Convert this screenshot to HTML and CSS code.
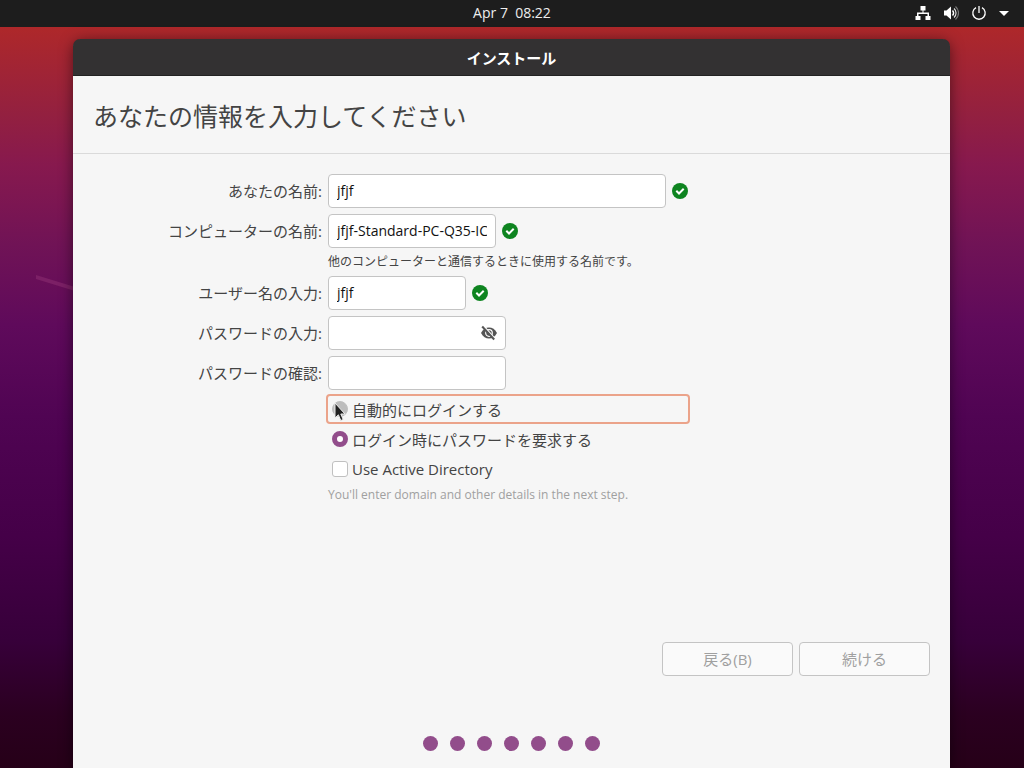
FILE: index.html
```html
<!DOCTYPE html>
<html lang="ja">
<head>
    <meta charset="UTF-8">
    <meta name="viewport" content="width=device-width, initial-scale=1.0">
    <title>インストール</title>
    <link rel="stylesheet" href="styles.css">
</head>
<body>
    <svg class="streak" viewBox="0 0 40 18" aria-hidden="true">
        <path d="M1 0 L40 12 V16 L1 4 Z"/>
    </svg>

    <header class="topbar">
        <time class="clock">Apr 7&nbsp; 08:22</time>
        <div class="tray">
            <svg width="16" height="16" viewBox="0 0 16 16" fill="#fff">
                <path d="M5.500 1h5v4.500h-2v2H14V11h1.500v4h-5v-4h2V9h-9v2h2v4h-5v-4H2V7.500h5.500v-2h-2z"/>
            </svg>
            <svg width="16" height="16" viewBox="0 0 16 16">
                <path d="M1 5.500h2.500L8 1.500v13L3.500 10.500H1z" fill="#fff"/>
                <path d="M9.500 5.500a3.500 3.500 0 0 1 0 5" fill="none" stroke="#fff" stroke-width="1.500"/>
                <path d="M11 3.500a6 6 0 0 1 0 9" fill="none" stroke="#ddd" stroke-width="1.200"/>
                <path d="M12.500 1.500a8.500 8.500 0 0 1 0 13" fill="none" stroke="#777" stroke-width="1.200"/>
            </svg>
            <svg width="16" height="16" viewBox="0 0 16 16" fill="none" stroke="#fff" stroke-width="1.300">
                <path d="M5 2.600a6.200 6.200 0 1 0 6 0M8 1v7"/>
            </svg>
            <svg width="10" height="16" viewBox="0 0 10 16" fill="#fff">
                <path d="M0 6h10L5 11z"/>
            </svg>
        </div>
    </header>

    <main class="window">
        <div class="titlebar">インストール</div>
        <h1>あなたの情報を入力してください</h1>

        <form class="form">
            <div class="row">
                <label for="name">あなたの名前:</label>
                <div class="field">
                    <input class="entry entry-name" id="name" type="text" value="jfjf">
                    <svg class="ok" viewBox="0 0 16 16"><circle cx="8" cy="8" r="8"/><path d="M4.300 7.800l2.700 2.700 4.700-4.700"/></svg>
                </div>
            </div>
            <div class="row">
                <label for="host">コンピューターの名前:</label>
                <div class="field">
                    <input class="entry entry-host" id="host" type="text" value="jfjf-Standard-PC-Q35-ICH9-2009">
                    <svg class="ok" viewBox="0 0 16 16"><circle cx="8" cy="8" r="8"/><path d="M4.300 7.800l2.700 2.700 4.700-4.700"/></svg>
                </div>
            </div>
            <p class="hint">他のコンピューターと通信するときに使用する名前です。</p>
            <div class="row">
                <label for="user">ユーザー名の入力:</label>
                <div class="field">
                    <input class="entry entry-user" id="user" type="text" value="jfjf">
                    <svg class="ok" viewBox="0 0 16 16"><circle cx="8" cy="8" r="8"/><path d="M4.300 7.800l2.700 2.700 4.700-4.700"/></svg>
                </div>
            </div>
            <div class="row">
                <label for="password">パスワードの入力:</label>
                <div class="field">
                    <div class="secret">
                        <input class="entry entry-password" id="password" type="password">
                        <button class="reveal" type="button" aria-label="パスワードを表示">
                            <svg width="16" height="16" viewBox="0 0 16 16">
                                <path d="M0 8c2-3.700 4.800-5.500 8-5.500S14 4.300 16 8c-2 3.700-4.800 5.500-8 5.500S2 11.700 0 8z" fill="#555"/>
                                <circle cx="8" cy="8" r="3.300" fill="none" stroke="#fff" stroke-width="1.200"/>
                                <path d="M2.700 1l12 13.500" stroke="#fff" stroke-width="1.500"/>
                                <path d="M1.200 1.500l12 13" stroke="#555" stroke-width="2"/>
                            </svg>
                        </button>
                    </div>
                </div>
            </div>
            <div class="row">
                <label for="confirm">パスワードの確認:</label>
                <div class="field">
                    <input class="entry entry-password" id="confirm" type="password">
                </div>
            </div>

            <div class="options">
                <label class="option focused">
                    <input class="radio hovered" type="radio" name="login">自動的にログインする
                    <svg class="pointer" viewBox="0 0 12 20" aria-hidden="true">
                        <path d="M1 1v15l3.400-3.200 2.400 5.700 2.400-1-2.400-5.500H11z"/>
                    </svg>
                </label>
                <label class="option">
                    <input class="radio" type="radio" name="login" checked>ログイン時にパスワードを要求する
                </label>
                <label class="option">
                    <input class="check" type="checkbox">Use Active Directory
                </label>
            </div>
            <p class="hint muted">You'll enter domain and other details in the next step.</p>
        </form>

        <div class="actions">
            <button class="btn" type="button" disabled>戻る(B)</button>
            <button class="btn" type="button" disabled>続ける</button>
        </div>

        <div class="dots">
            <span></span><span></span><span></span><span></span><span></span><span></span><span></span>
        </div>
    </main>
</body>
</html>
```
FILE: styles.css
```css
* {
    box-sizing: border-box;
}
body {
    margin: 0;
    min-height: 100vh;
    display: flex;
    flex-direction: column;
    position: relative;
    font-family: "Open Sans", "Noto Sans CJK JP", sans-serif;
    font-size: 15px;
    color: #444;
    background: linear-gradient(#ae282a 27px, #932040 115px, #87194e 165px, #701356 245px, #5f0a5b 325px, #500453 416px, #450048 535px, #37003a 640px, #2b0020 715px, #260018 768px);
}
.streak {
    position: absolute;
    left: 35px;
    top: 275px;
    width: 40px;
    height: 18px;
    fill: #7c2066;
}

/* top bar */
.topbar {
    display: grid;
    grid-template-columns: 1fr auto 1fr;
    align-items: center;
    height: 27px;
    padding: 0 15px 2px;
    background: #1d1d1d;
    color: #eee;
    font-size: 14px;
}
.clock {
    grid-column: 2;
}
.tray {
    display: flex;
    justify-content: flex-end;
    gap: 12px;
}

/* installer window */
.window {
    flex: 1;
    display: flex;
    flex-direction: column;
    position: relative;
    margin: 12px 74px 0 73px;
    border-radius: 10px 10px 0 0;
    background: #f6f6f6;
    box-shadow: 0 2px 14px rgba(0, 0, 0, 0.5);
}
.titlebar {
    height: 37px;
    line-height: 38px;
    border-radius: 7px 7px 0 0;
    background: #333132;
    border-bottom: 1px solid #222;
    color: #fff;
    font-weight: bold;
    text-align: center;
}
h1 {
    margin: 0;
    padding: 22px 20px 18px;
    border-bottom: 1px solid #dadada;
    font-size: 25px;
    font-weight: normal;
    line-height: 37px;
}
.form {
    display: flex;
    flex-direction: column;
    padding: 20px;
}
.row {
    display: grid;
    grid-template-columns: 229px 1fr;
    gap: 6px;
    align-items: center;
    margin-bottom: 6px;
}
.row > label {
    padding-bottom: 2px;
    text-align: right;
}
.field {
    display: flex;
    align-items: center;
    gap: 6px;
}
.entry {
    height: 34px;
    padding: 0 8px 2px;
    border: 1px solid #c4c4c4;
    border-radius: 4px;
    background: #fff;
    color: #111;
    font-family: inherit;
    font-size: 14px;
    font-weight: 500;
}
.entry-name { width: 338px; }
.entry-host { width: 168px; }
.entry-user { width: 138px; }
.entry-password { width: 178px; }
.ok {
    width: 16px;
    height: 16px;
}
.ok circle { fill: #0e8420; }
.ok path {
    fill: none;
    stroke: #fff;
    stroke-width: 2;
}
.secret {
    display: flex;
    position: relative;
}
.reveal {
    position: absolute;
    right: 9px;
    top: 9px;
    width: 16px;
    height: 16px;
    padding: 0;
    border: none;
    background: none;
}
.reveal svg {
    display: block;
}
.hint {
    margin: 0 0 6px 235px;
    font-size: 12px;
    line-height: 16px;
}
.muted {
    color: #a0a0a0;
}

.options {
    display: flex;
    flex-direction: column;
    gap: 4px;
    width: 360px;
    margin: 0 0 5px 235px;
}
.option {
    display: flex;
    align-items: center;
    gap: 4px;
    position: relative;
    height: 26px;
    padding-left: 4px;
}
.focused {
    outline: 2px solid #eba38a;
    border-radius: 2px;
}
.radio, .check {
    appearance: none;
    width: 16px;
    height: 16px;
    margin: 0;
    background: #fff;
    border: 1px solid #c0c0c0;
}
.radio { border-radius: 50%; }
.check { border-radius: 3px; }
.radio.hovered {
    background: #bdbdbd;
}
.radio:checked {
    border: 5px solid #924d8b;
}
.pointer {
    position: absolute;
    left: 6px;
    top: 6px;
    width: 12px;
    height: 20px;
    fill: #222;
    stroke: #eee;
    stroke-width: 1;
}

/* bottom */
.actions {
    display: flex;
    justify-content: flex-end;
    gap: 6px;
    margin-top: auto;
    padding: 0 20px;
}
.btn {
    width: 131px;
    height: 34px;
    padding: 0 0 2px;
    border: 1px solid #c4c4c4;
    border-radius: 4px;
    background: #fafafa;
    color: #a0a0a0;
    font-family: inherit;
    font-size: 15px;
}
.dots {
    display: flex;
    justify-content: center;
    gap: 12px;
    padding: 60px 0 17px;
}
.dots span {
    width: 15px;
    height: 15px;
    border-radius: 50%;
    background: #924d8b;
}
```
